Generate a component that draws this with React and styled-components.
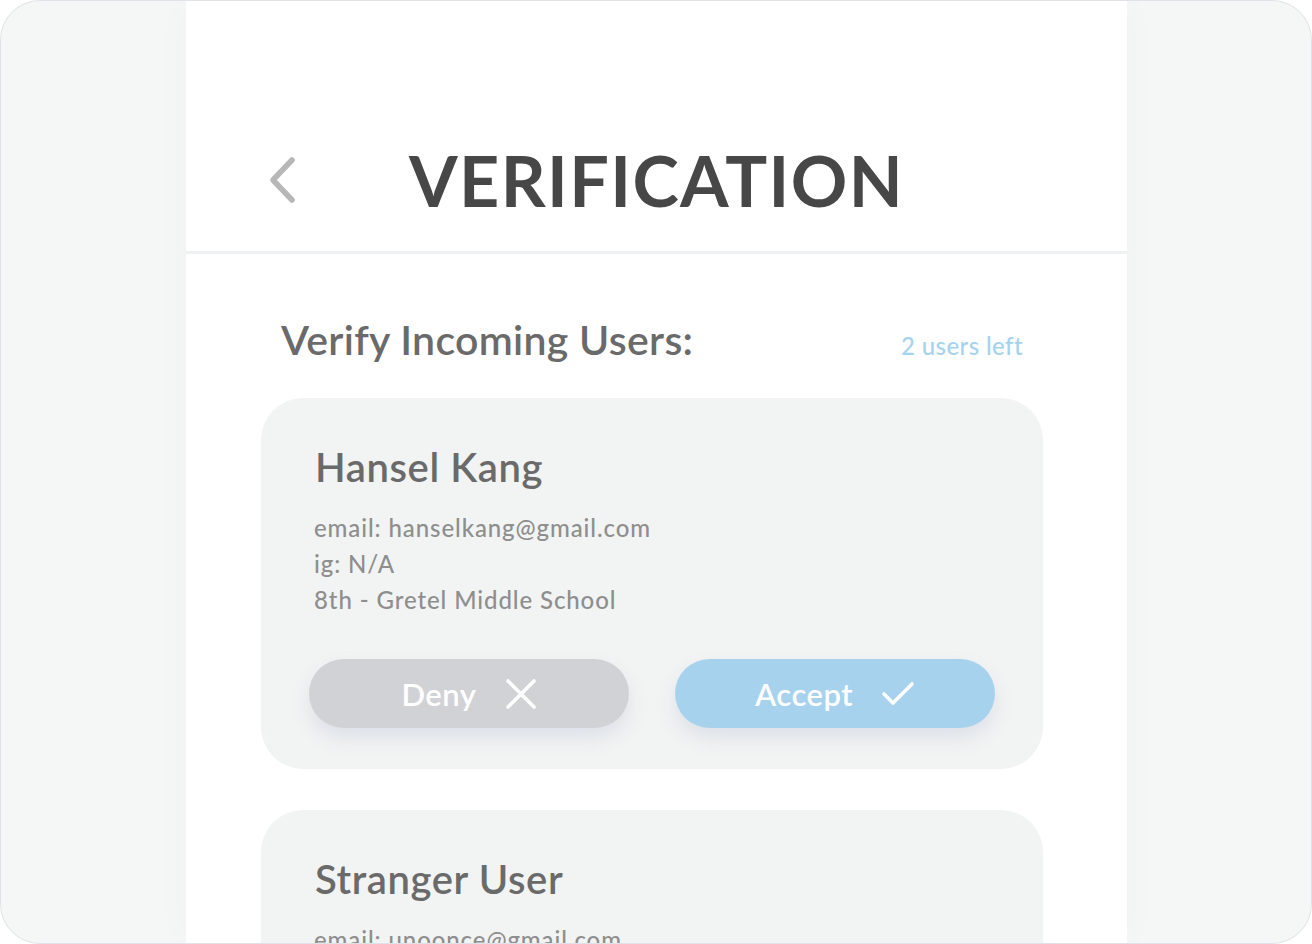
import styled, { createGlobalStyle } from 'styled-components';

const GlobalStyle = createGlobalStyle`
    html, body {
        margin: 0;
        padding: 0;
        background: #ffffff;
    }
    * {
        box-sizing: border-box;
    }
`

const users = [
    {
        name: 'Hansel Kang',
        email: 'hanselkang@gmail.com',
        ig: 'N/A',
        school: '8th - Gretel Middle School',
    },
    {
        name: 'Stranger User',
        email: 'unoonce@gmail.com',
        ig: 'N/A',
        school: '7th - Gretel Middle School',
    },
];

const ChevronLeft = () => (
    <svg width="34" height="50" viewBox="0 0 34 50" fill="none">
        <path d="M25 5 L6 25 L25 45" stroke="#b7b7b7" strokeWidth="5.5" strokeLinecap="round" strokeLinejoin="round" />
    </svg>
);

const CrossIcon = () => (
    <svg width="32" height="32" viewBox="0 0 32 32" fill="none">
        <path d="M3 3 L29 29 M29 3 L3 29" stroke="#ffffff" strokeWidth="3.6" strokeLinecap="round" />
    </svg>
);

const CheckIcon = () => (
    <svg width="34" height="26" viewBox="0 0 34 26" fill="none">
        <path d="M3 13 L12 22 L31 3" stroke="#ffffff" strokeWidth="3.6" strokeLinecap="round" strokeLinejoin="round" />
    </svg>
);

const UserCard = ({ user }) => (
    <Card>
        <Name>{user.name}</Name>
        <Details>
            <p>email: {user.email}</p>
            <p>ig: {user.ig}</p>
            <p>{user.school}</p>
        </Details>
        <Actions>
            <ActionButton $variant="deny">
                Deny <CrossIcon />
            </ActionButton>
            <ActionButton $variant="accept">
                Accept <CheckIcon />
            </ActionButton>
        </Actions>
    </Card>
);

const App = () => {
    return (
        <>
            <GlobalStyle />
            <Frame>
                <Panel>
                    <Header>
                        <BackButton aria-label="back">
                            <ChevronLeft />
                        </BackButton>
                        <Title>VERIFICATION</Title>
                    </Header>
                    <Content>
                        <SectionHead>
                            <h2>Verify Incoming Users:</h2>
                            <span>2 users left</span>
                        </SectionHead>
                        <CardList>
                            {users.map(u => <UserCard key={u.name} user={u} />)}
                        </CardList>
                    </Content>
                </Panel>
            </Frame>
        </>
    );
}

const Frame = styled.div`
    width: 1312px;
    height: 944px;
    border: 1px solid #dfe2e6;
    border-radius: 40px;
    background: #f5f6f6;
    overflow: hidden;
    display: flex;
    justify-content: center;
    padding-left: 1px;
`

const Panel = styled.div`
    width: 941px;
    height: 100%;
    background: #ffffff;
    box-shadow: 0 0 40px rgba(0, 0, 0, 0.025);
    display: flex;
    flex-direction: column;
`

const Header = styled.header`
    height: 253px;
    flex-shrink: 0;
    border-bottom: 3px solid #f0f1f2;
    display: flex;
    align-items: center;
    padding: 108px 0 0 81px;
`

const BackButton = styled.button`
    border: none;
    background: none;
    padding: 0;
    width: 34px;
    height: 50px;
    display: flex;
    cursor: pointer;
`

const Title = styled.h1`
    margin: 0 0 0 108px;
    font-family: 'Lato', 'Liberation Sans', sans-serif;
    font-weight: 700;
    font-size: 70px;
    letter-spacing: 1.4px;
    color: #474747;
    line-height: 1;
`

const Content = styled.main`
    padding: 0 84px 0 75px;
`

const SectionHead = styled.div`
    display: flex;
    justify-content: space-between;
    align-items: baseline;
    padding: 62px 20px 0 20px;
    margin-bottom: 34px;

    h2 {
        margin: 0;
        font-family: 'Lato', 'Liberation Sans', sans-serif;
        font-weight: 600;
        font-size: 41px;
        letter-spacing: 0.3px;
        color: #6a6a6a;
        line-height: 48px;
    }

    span {
        font-family: 'Lato', 'Liberation Sans', sans-serif;
        font-size: 24px;
        font-weight: 500;
        letter-spacing: 0.4px;
        color: #a5d3ef;
    }
`

const CardList = styled.div`
    display: flex;
    flex-direction: column;
    gap: 41px;
`

const Card = styled.section`
    background: #f2f3f3;
    border-radius: 42px;
    padding: 45px 48px 41px 48px;
`

const Name = styled.h3`
    margin: 0 0 19px 6px;
    font-family: 'Lato', 'Liberation Sans', sans-serif;
    font-weight: 600;
    font-size: 40px;
    letter-spacing: 0.6px;
    line-height: 48px;
    color: #6a6a6a;
`

const Details = styled.div`
    margin-left: 5px;
    margin-bottom: 41px;

    p {
        margin: 0;
        font-family: 'Lato', 'Liberation Sans', sans-serif;
        font-size: 24px;
        font-weight: 500;
        letter-spacing: 0.9px;
        line-height: 36px;
        color: #8e8e8e;
    }
`

const Actions = styled.div`
    display: flex;
    justify-content: space-between;
`

const ActionButton = styled.button`
    width: 320px;
    height: 69px;
    border: none;
    border-radius: 35px;
    display: flex;
    align-items: center;
    justify-content: center;
    gap: 28px;
    font-family: 'Lato', 'Liberation Sans', sans-serif;
    font-size: 31px;
    font-weight: 600;
    letter-spacing: 0.5px;
    color: #ffffff;
    background: ${props => props.$variant === 'accept' ? '#a6d2ee' : '#d1d2d6'};
    box-shadow: 0 10px 18px rgba(150, 170, 200, 0.22);
    cursor: pointer;
`

export default App;
